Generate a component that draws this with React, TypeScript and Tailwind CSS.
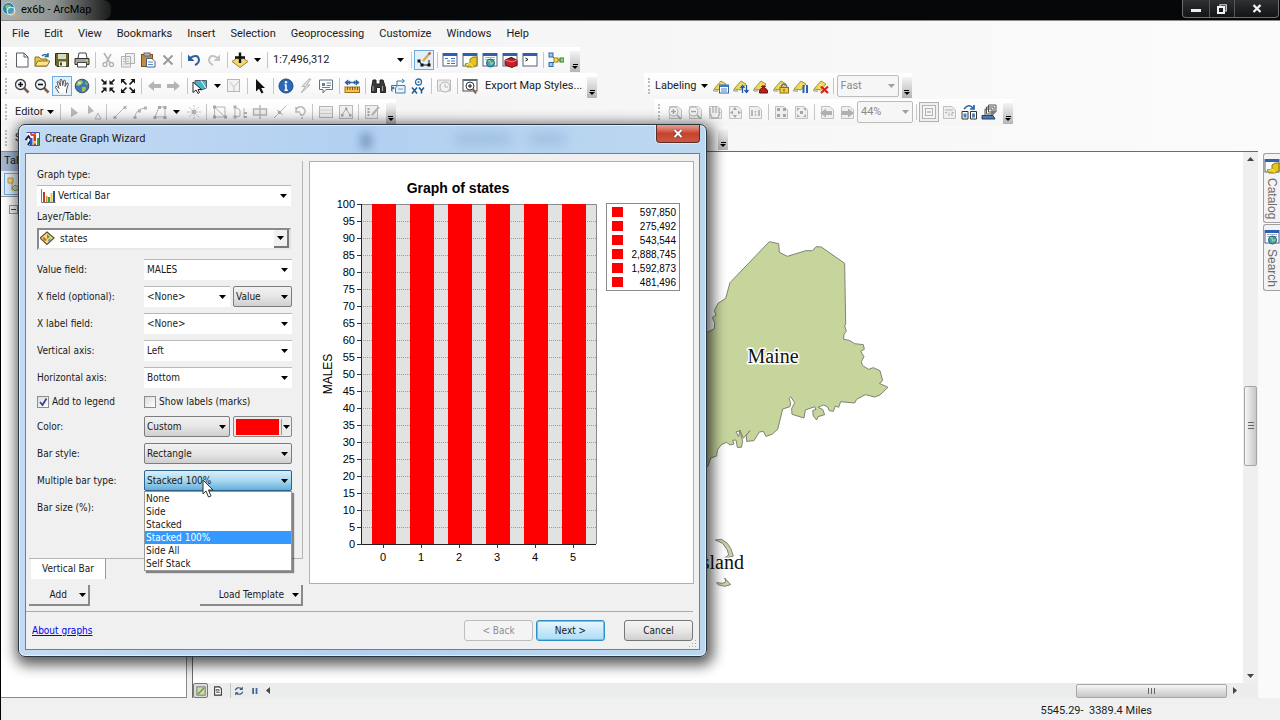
import React from "react";

type Children = { children?: React.ReactNode };

/* ---------- icon drawings, 16 x 16 ---------- */

const TIP = "M1 11 L8 3 L13 6 L8 12 Z";

function LabelTag() {
  return (
    <>
      <path d="M0 13 L4 8 M1 13 H5" stroke="#8a8a6a" />
      <path d={TIP} fill="#ecd95c" stroke="#a8963a" />
      <path d="M7 6 L9 8" stroke="#fff3a0" />
    </>
  );
}

function WindowFrame({ children }: Children) {
  return (
    <>
      <rect x="1" y="1.5" width="14" height="12.5" fill="#fff" stroke="#55637c" />
      <rect x="1" y="1" width="14" height="3" fill="#2f5fae" />
      {children}
    </>
  );
}

function PageFrame({ children }: Children) {
  return (
    <>
      <path d="M2.5 2.5 H11 L14.5 6 V14.5 H2.5 Z" fill="#efefef" stroke="#c0c0c0" />
      {children}
    </>
  );
}

const ICONS: Record<string, React.ReactNode> = {
  new: <path d="M2.5 1 H10 L14 5 V15 H2.5 Z M10 1 V5 H14" fill="#fff" stroke="#555d66" />,
  open: (
    <>
      <path d="M1 14 V5 H5 L7 7 H13 V14 Z" fill="#e8c34c" stroke="#8a7020" />
      <path d="M1 14 L4 9 H16 L13 14 Z" fill="#fbe58a" stroke="#8a7020" />
      <path d="M8 4 Q11 1 14 4 M14 1 V4.5 H10.5" fill="none" stroke="#2d6f9e" strokeWidth="1.5" />
    </>
  ),
  save: (
    <>
      <path d="M1.5 1.5 H14.5 V14.5 H3 L1.5 13 Z" fill="#6b692f" stroke="#33331c" />
      <rect x="4" y="2" width="8" height="5" fill="#d9dbc0" />
      <rect x="5" y="9.5" width="7" height="5" fill="#f2f2e6" />
      <rect x="6" y="10.5" width="2" height="3" fill="#44442a" />
    </>
  ),
  print: (
    <>
      <path d="M4 6 L5 1 H12 L13 6" fill="#fff" stroke="#444" />
      <path d="M1 6.5 H15 V12.5 H1 Z" fill="#a5a59c" stroke="#333" />
      <path d="M3.5 10.5 H12.5 V15 H3.5 Z" fill="#fff" stroke="#444" />
      <path d="M12 8.5 h2" stroke="#f3d24a" />
    </>
  ),
  cut: (
    <>
      <path d="M4 1 L10 11 M11 2 L6 11" stroke="#b4b4b4" strokeWidth="1.6" />
      <circle cx="5" cy="12.5" r="2" fill="none" stroke="#b4b4b4" strokeWidth="1.4" />
      <circle cx="11.5" cy="12.5" r="2" fill="none" stroke="#b4b4b4" strokeWidth="1.4" />
    </>
  ),
  copy: (
    <>
      <path d="M5.500 1.500 H14.500 V11.500 H5.500 Z M1.500 4.500 H10.500 V15 H1.500 Z" fill="#f0f0f0" stroke="#b0b0b0" />
      <path d="M3 7 H9 M3 9.500 H9 M3 12 H9" stroke="#bdbdbd" />
    </>
  ),
  paste: (
    <>
      <rect x="1.5" y="2.500" width="11" height="12" fill="#c28a3c" stroke="#7a5218" />
      <rect x="4" y="1" width="6" height="3" fill="#b9b9b9" stroke="#666" />
      <path d="M6.500 6.500 H12 L15 9.500 V15 H6.500 Z" fill="#fff" stroke="#446087" />
      <path d="M8 10 H13 M8 12.500 H13" stroke="#5b85bb" />
    </>
  ),
  delete: <path d="M3.500 3.500 L12.500 12.500 M12.500 3.500 L3.500 12.500" stroke="#9b9b9b" strokeWidth="2" />,
  undo: (
    <>
      <path d="M4 6 Q12 1 13 8 Q13 11 9 13" fill="none" stroke="#2f5f9f" strokeWidth="2" />
      <path d="M2 2.500 V9 H8.500 Z" fill="#2f5f9f" />
    </>
  ),
  redo: (
    <>
      <path d="M12 6 Q4 1 3 8 Q3 11 7 13" fill="none" stroke="#c4c4c4" strokeWidth="2" />
      <path d="M14 2.500 V9 H7.500 Z" fill="#c4c4c4" />
    </>
  ),
  addData: (
    <>
      <path d="M8 4 L16 9.500 L8 15.500 L0 9.500 Z" fill="#f1d777" stroke="#a08020" />
      <path d="M8 0.500 V11 M3 5.500 H13" stroke="#111" strokeWidth="2.400" />
    </>
  ),
  editTool: (
    <>
      <path d="M3 9 L6 13 H13 V8" fill="none" stroke="#111" />
      <path d="M1.500 7.500 h3 v3 h-3z M4.500 11.500 h3 v3 h-3z M11.500 11.500 h3 v3 h-3z" fill="#111" />
      <path d="M7 9 L13.500 1.500" stroke="#d9ad3f" strokeWidth="2.400" />
      <path d="M12.500 2.500 L14.500 0.500" stroke="#c2574a" strokeWidth="2.400" />
    </>
  ),
  winToc: (
    <WindowFrame>
      <path d="M3 6.500 H6 M5 9 H8 M5 11.500 H8" stroke="#3a75c4" />
      <path d="M9 6.500 H13 M9 9 H13 M9 11.500 H13" stroke="#3a75c4" />
    </WindowFrame>
  ),
  winCatalog: (
    <WindowFrame>
      <path d="M8 7 L11 5 H15 V13 L11 15 H5 L3 12 L8 11 Z" fill="#e3c51f" stroke="#8f7a10" />
      <path d="M4 13 L8 11 L11 15" stroke="#f9ea7c" fill="none" />
    </WindowFrame>
  ),
  winSearch: (
    <WindowFrame>
      <path d="M3 5.500 H13 M3 7.500 H13" stroke="#a9b3c2" />
      <circle cx="8.500" cy="11" r="4" fill="#3fa0b8" stroke="#1f5f94" />
      <path d="M6 9 Q9 8 8.500 12 Q11 12 11 10" stroke="#8fd07a" fill="none" strokeWidth="1.500" />
    </WindowFrame>
  ),
  winToolbox: (
    <WindowFrame>
      <path d="M3 8 L9 5.500 L15 8 V13 L10 15.500 L3 13 Z" fill="#c8202a" stroke="#7b1015" />
      <path d="M3 8 L10 10 L15 8" stroke="#f08080" fill="none" />
      <path d="M7 7 Q9 4 12 7" stroke="#5e0c10" fill="none" />
    </WindowFrame>
  ),
  winPython: (
    <WindowFrame>
      <path d="M3.500 6 L6 7.500 L3.500 9" fill="none" stroke="#111" />
    </WindowFrame>
  ),
  model: (
    <>
      <path d="M4 4 L8 8 L4 12 M8 8 H12" stroke="#444" fill="none" />
      <rect x="1" y="1" width="4" height="4" fill="#9cc7ee" stroke="#2f69a8" />
      <rect x="1" y="10.500" width="4" height="4" fill="#9cc7ee" stroke="#2f69a8" />
      <rect x="6" y="6" width="4" height="4" fill="#f3e14c" stroke="#968617" />
      <rect x="12" y="6" width="4" height="4" fill="#8ed37a" stroke="#357f2a" />
    </>
  ),
  zoomIn: (
    <>
      <path d="M10 10 L14.500 14.500" stroke="#8a5a4a" strokeWidth="2.600" />
      <circle cx="6.500" cy="6.500" r="5" fill="#eef4fa" stroke="#3d3d3d" strokeWidth="1.300" />
      <path d="M6.500 4 V9 M4 6.500 H9" stroke="#111" strokeWidth="1.600" />
    </>
  ),
  zoomOut: (
    <>
      <path d="M10 10 L14.500 14.500" stroke="#8a5a4a" strokeWidth="2.600" />
      <circle cx="6.500" cy="6.500" r="5" fill="#eef4fa" stroke="#3d3d3d" strokeWidth="1.300" />
      <path d="M4 6.500 H9" stroke="#111" strokeWidth="1.600" />
    </>
  ),
  pan: (
    <path
      d="M5 15 L1.500 9.500 Q1 8 3 8.500 L5 10.500 L3 4 Q3.500 2.500 4.800 4 L6.500 8 L6 2 Q7 0.500 8 2 L8.700 7.500 L9.800 2.500 Q11 1.500 11.500 3 L11 8.500 L13 5 Q14.500 4.500 14.200 6.500 L12.500 12 V15"
      fill="#fff"
      stroke="#555"
    />
  ),
  globe: (
    <>
      <circle cx="8" cy="8" r="6.800" fill="#3c78b8" stroke="#3d4f66" />
      <path d="M4 3 Q8 1 9 4 Q9 6 6 7 Q4 9 2 7 Z M8 9 Q12 8 12 10 Q11 14 8 14 Z M11 3 L14 6 L12 7 Z" fill="#a3bf4c" />
      <circle cx="5.500" cy="5" r="1.600" fill="#e6f3d2" opacity=".7" />
    </>
  ),
  fixedIn: (
    <>
      <path d="M1.500 1.500 L5 5 M14.500 1.500 L11 5 M1.500 14.500 L5 11 M14.500 14.500 L11 11" stroke="#151515" strokeWidth="1.700" />
      <path d="M6.500 2 V6.500 H2 Z M9.500 2 V6.500 H14 Z M6.500 14 V9.500 H2 Z M9.500 14 V9.500 H14 Z" fill="#151515" />
    </>
  ),
  fixedOut: (
    <>
      <path d="M3 3 L6.500 6.500 M13 3 L9.500 6.500 M3 13 L6.500 9.500 M13 13 L9.500 9.500" stroke="#151515" strokeWidth="1.700" />
      <path d="M1 5.500 V1 H5.500 Z M15 5.500 V1 H10.500 Z M1 10.500 V15 H5.500 Z M15 10.500 V15 H10.500 Z" fill="#151515" />
    </>
  ),
  back: <path d="M2 8 L8 3 V6 H15 V10 H8 V13 Z" fill="#b4b4b4" />,
  forward: <path d="M14 8 L8 3 V6 H1 V10 H8 V13 Z" fill="#b4b4b4" />,
  selectFeat: (
    <>
      <path d="M3 2.500 H14.500 V10 L9 12 L3 8 Z" fill="#43b6cf" stroke="#4e5d63" />
      <path d="M9 2.500 L14 10" stroke="#fff" />
      <path d="M1 4 V14.500 L4 12 L6 15.500 L7.500 14.500 L6 11.500 H9.500 Z" fill="#fff" stroke="#222" />
    </>
  ),
  clearSel: (
    <>
      <rect x="1.500" y="1.500" width="12" height="12" fill="#f2f2f2" stroke="#b6b6b6" />
      <path d="M4 4 L8 9 L13 3 M8 9 V13" stroke="#c4c4c4" fill="none" />
    </>
  ),
  pointer: <path d="M4 1 V13.500 L7 10.800 L9.500 15.500 L11.500 14.500 L9.200 10 H13 Z" fill="#111" />,
  info: (
    <>
      <circle cx="8" cy="8" r="7" fill="#2d67b8" stroke="#1c4a8a" />
      <path d="M8 7 V12 M6.500 7 H8.500 M6.500 12.300 H9.800" stroke="#fff" strokeWidth="1.600" />
      <circle cx="8" cy="4.200" r="1.200" fill="#fff" />
    </>
  ),
  bolt: <path d="M11 1 L4 8.500 H7.500 L3 15 L12 7 H8.500 L13 1 Z" fill="#e3e3e3" stroke="#b3b3b3" />,
  popup: (
    <>
      <path d="M1.500 2 H14.500 V11.500 H8 L5 15 V11.500 H1.500 Z" fill="#fff" stroke="#66717c" />
      <path d="M4 5 h3 v3 h-3 z" fill="#4a87c0" />
      <path d="M8.500 5 H13 M8.500 7.500 H13 M4 9.500 H12" stroke="#4a87c0" />
    </>
  ),
  measure: (
    <>
      <path d="M1 4.500 H15" stroke="#2562a0" strokeWidth="1.200" />
      <path d="M0.500 4.500 L4 1.500 V7.500 Z M7.500 4.500 L4.500 2 V7 Z M15.500 4.500 L12 1.500 V7.500 Z M8.500 4.500 L11.500 2 V7 Z" fill="#2562a0" />
      <rect x="1" y="9" width="14.500" height="5.500" fill="#f3c257" stroke="#a0701f" />
      <path d="M3.500 9 v3 M6 9 v3 M8.500 9 v3 M11 9 v3 M13.500 9 v3" stroke="#7c5512" />
    </>
  ),
  find: (
    <>
      <path d="M3 2 h3 v4 h4 v-4 h3 l2.500 8 v4.500 h-5 v-5 h-4 v5 h-5 v-4.500 Z" fill="#3a3a3a" stroke="#222" />
      <path d="M3 8 v5 M12.500 8 v5" stroke="#aaa" />
    </>
  ),
  route: (
    <>
      <path d="M7.500 7.500 H15 V15 H5.500 V10 Z" fill="#eaf3fb" stroke="#3b7bb2" />
      <path d="M3 13 H1.500 V7.500 H7 M7 7 V3 H14 M12 1 L14.500 3 L12 5" stroke="#3b7bb2" fill="none" />
      <circle cx="3" cy="10" r="1.500" fill="#3b7bb2" />
      <path d="M8 11 H13" stroke="#6ea0c9" />
    </>
  ),
  gotoXY: (
    <>
      <circle cx="8.500" cy="4" r="3" fill="#fff" stroke="#2d6ea8" strokeWidth="1.300" />
      <circle cx="8.500" cy="4" r="1" fill="#2d6ea8" />
      <path d="M2 9.500 L7 15.500 M7 9.500 L2 15.500 M9 9.500 L11.500 12.500 L14 9.500 M11.500 12.500 V15.500" stroke="#1f5795" strokeWidth="1.500" fill="none" />
    </>
  ),
  time: (
    <>
      <path d="M1.500 2 H14.500 V13 H1.500 Z" fill="#ececec" stroke="#bcbcbc" />
      <circle cx="9" cy="9" r="5" fill="#f3f3f3" stroke="#b3b3b3" />
      <path d="M9 6 V9 H12" stroke="#b3b3b3" fill="none" />
    </>
  ),
  exportMap: (
    <>
      <rect x="1" y="1.500" width="14" height="11.500" fill="#fff" stroke="#4c4c4c" />
      <rect x="1" y="1" width="14" height="2" fill="#5b6b80" />
      <circle cx="8" cy="8" r="4" fill="#fff" stroke="#333" />
      <path d="M8 6 V10 M6 8 H10" stroke="#111" />
      <path d="M11 11 L14 15.500" stroke="#8a5a4a" strokeWidth="2" />
    </>
  ),
  editArrow: <path d="M5 3 V13 L12 9 Z" fill="#b9b9b9" />,
  editArrowA: (
    <>
      <path d="M2 1 V10 L8 7 Z" fill="#b9b9b9" />
      <path d="M9 15 L12 9 L15 15 Z" fill="none" stroke="#b9b9b9" />
    </>
  ),
  line: (
    <>
      <path d="M3 13 L13 3" stroke="#b4b4b4" />
      <path d="M1.500 12 h3 v3 h-3z M11.500 2 h3 v3 h-3z" fill="#b4b4b4" />
    </>
  ),
  arc: (
    <>
      <path d="M3 13 Q4 5 13 4" stroke="#b4b4b4" fill="none" />
      <path d="M1.500 12 h3 v3 h-3z M6 5.500 h3 v3 h-3z M12 2.500 h3 v3 h-3z" fill="#b4b4b4" />
    </>
  ),
  trace: (
    <>
      <path d="M3 13 H9 L13 13 V3 H7 L3 13" stroke="#b4b4b4" fill="none" />
      <path d="M1.500 12 h3 v3 h-3z M6 2 h3 v3 h-3z M11.500 2 h3 v3 h-3z M11.500 12 h3 v3 h-3z" fill="#a8a8a8" />
    </>
  ),
  point: (
    <>
      <path d="M8 1 V15 M1 8 H15 M3 3 L13 13 M13 3 L3 13" stroke="#c2c2c2" strokeDasharray="2 1" />
      <rect x="6" y="6" width="4" height="4" fill="#b4b4b4" />
    </>
  ),
  editVert: (
    <>
      <path d="M2.500 3 H13 V13 H2.500 Z M2.500 3 L13 13" fill="none" stroke="#b4b4b4" />
      <path d="M1 1.500 h3 v3 h-3z M1 11.500 h3 v3 h-3z M12 11.500 h3 v3 h-3z" fill="#a8a8a8" />
    </>
  ),
  reshape: (
    <>
      <path d="M3 2 V14 M3 3 L8 6 V12 L3 13 M12 4 V14" fill="none" stroke="#b4b4b4" />
      <path d="M1.500 1.500 h3 v3 h-3z M1.500 11.500 h3 v3 h-3z M12 8 h3 v2 h-3z M12 12 h3 v2 h-3z" fill="#b0b0b0" />
    </>
  ),
  cutPoly: <path d="M1.500 5 H14.500 V11 H1.500 Z M8 1 V15" fill="#eee" stroke="#b4b4b4" strokeWidth="1.400" />,
  split: (
    <>
      <path d="M2 14 L14 2 M5 6 L11 11" stroke="#b4b4b4" />
      <rect x="6" y="7" width="3" height="3" fill="#a8a8a8" />
    </>
  ),
  rotate: <path d="M4 7 Q5 2 10 3 Q15 6 12 10 Q9 13 8 9 M4 3 V8 H8 M9 14 h2" fill="none" stroke="#b9b9b9" strokeWidth="1.500" />,
  table: (
    <>
      <rect x="1.500" y="2.500" width="13" height="11" fill="#eee" stroke="#b4b4b4" />
      <path d="M2 6 H14 M2 9.500 H14" stroke="#cfcfcf" />
    </>
  ),
  sketch: (
    <>
      <rect x="1.500" y="1.500" width="13" height="13" fill="#f0f0f0" stroke="#bababa" />
      <path d="M4 11 L8 5 L12 11" stroke="#aaa" fill="none" />
      <path d="M3 10 h2.500 v2.500 h-2.500z M7 3.500 h2.500 v2.500 h-2.500z M11 10 h2.500 v2.500 h-2.500z" fill="#a4a4a4" />
    </>
  ),
  features: (
    <>
      <rect x="1.500" y="1.500" width="12" height="13" fill="#efefef" stroke="#bdbdbd" />
      <path d="M3.500 5 h2 M3.500 8 h2 M3.500 11 h2" stroke="#a4a4a4" strokeWidth="2" />
      <path d="M8 11 L15 3" stroke="#b4b4b4" strokeWidth="2" />
    </>
  ),
  lblManager: (
    <>
      <LabelTag />
      <rect x="6.500" y="7" width="9" height="8" fill="#fff" stroke="#2c62ad" />
      <rect x="6.500" y="7" width="9" height="2" fill="#3f7acb" />
      <path d="M8 11 H14 M8 13 H14" stroke="#3f7acb" />
    </>
  ),
  lblPriority: (
    <>
      <LabelTag />
      <path d="M9.500 8 V15 M7.500 10 L9.500 7.500 L11.500 10 M13.500 7 V14 M11.500 12 L13.500 14.500 L15.500 12" stroke="#2056a8" fill="none" strokeWidth="1.300" />
    </>
  ),
  lblWeight: (
    <>
      <LabelTag />
      <path d="M8.500 8 h4 l-1 1.500 q4 2 3 5.500 h-8 q-1 -3.500 3 -5.500 Z" fill="#b32020" stroke="#6f1010" />
    </>
  ),
  lblLock: (
    <>
      <LabelTag />
      <path d="M8.500 10 V7.500 Q11 4.500 13.500 7.500 V10" fill="none" stroke="#6f6f6f" strokeWidth="1.500" />
      <rect x="7" y="9.500" width="8.500" height="5.500" fill="#f0cd45" stroke="#8a6f14" />
      <path d="M11 11 v2.500" stroke="#5a4608" />
    </>
  ),
  lblPause: (
    <>
      <LabelTag />
      <path d="M10.500 7 V15 M14 7 V15" stroke="#2c62ad" strokeWidth="2" />
    </>
  ),
  lblUnplaced: (
    <>
      <LabelTag />
      <path d="M8 8.500 L15 15 M15 8.500 L8 15" stroke="#d3241c" strokeWidth="2.300" />
    </>
  ),
  pgZoomIn: (
    <PageFrame>
      <circle cx="6.500" cy="7.500" r="4.500" fill="#f6f6f6" stroke="#b2b2b2" />
      <path d="M6.500 5 V10 M4 7.500 H9 M10 11 L14 15" stroke="#a6a6a6" strokeWidth="1.500" />
    </PageFrame>
  ),
  pgZoomOut: (
    <PageFrame>
      <circle cx="6.500" cy="7.500" r="4.500" fill="#f6f6f6" stroke="#b2b2b2" />
      <path d="M4 7.500 H9 M10 11 L14 15" stroke="#a6a6a6" strokeWidth="1.500" />
    </PageFrame>
  ),
  pgPan: (
    <PageFrame>
      <path d="M3 4 V9 M6 2 V9 M9 2 V9 M12 4 V9 M3 9 L5 14 H11 L13 8" fill="none" stroke="#b0b0b0" strokeWidth="1.400" />
    </PageFrame>
  ),
  pgWhole: (
    <PageFrame>
      <path d="M8 3 L10 6 H6 Z M8 14 L10 11 H6 Z M3 8.500 L6 6.500 V10.500 Z M14 8.500 L11 6.500 V10.500 Z" fill="#a6a6a6" />
    </PageFrame>
  ),
  pgOne: (
    <PageFrame>
      <path d="M5 6 V12 M8.500 7 v1.500 M8.500 10 v1.500 M12 6 V12" stroke="#a6a6a6" strokeWidth="1.500" />
    </PageFrame>
  ),
  pgIn: (
    <PageFrame>
      <path d="M4 4 h3 v3 h-3z M10 4 h3 v3 h-3z M4 10 h3 v3 h-3z M10 10 h3 v3 h-3z" fill="#a6a6a6" />
    </PageFrame>
  ),
  pgOut: (
    <PageFrame>
      <path d="M4 4 h3 L4 7z M13 4 v3 L10 4z M4 13 h3 L4 10z M13 13 h-3 L13 10z M7 7 h3 v3 h-3z" fill="#a6a6a6" />
    </PageFrame>
  ),
  pgBack: (
    <PageFrame>
      <path d="M1 9 L7 4.500 V7 H13 V11 H7 V13.500 Z" fill="#b0b0b0" />
    </PageFrame>
  ),
  pgForward: (
    <PageFrame>
      <path d="M15 9 L9 4.500 V7 H2 V11 H9 V13.500 Z" fill="#b0b0b0" />
    </PageFrame>
  ),
  draft: (
    <>
      <rect x="1.500" y="1.500" width="13" height="13" fill="#f4f4f4" stroke="#b4b4b4" />
      <rect x="4.500" y="4.500" width="7" height="7" fill="none" stroke="#b4b4b4" />
      <path d="M6 8 H10" stroke="#999" />
    </>
  ),
  focus: (
    <PageFrame>
      <path d="M4 6 H12 M4 8.500 H6 M8 8.500 V12 M11 8.500 H13 M11 8.500 V12" stroke="#b0b0b0" />
    </PageFrame>
  ),
  changeLayout: (
    <>
      <path d="M3 5 Q8 -1 12 4 M13 1 V5 H9" fill="none" stroke="#2c62ad" strokeWidth="1.700" />
      <path d="M1 7.500 H7 V15 H1 Z M9.500 7.500 H15.500 V15 H9.500 Z" fill="#fff" stroke="#333" />
      <path d="M2.500 9.500 h3 v4 h-3z M11 9.500 h3 v4 h-3z" fill="#4d80bd" />
    </>
  ),
  dataDriven: (
    <>
      <path d="M7.500 1 H15 V8 H7.500 Z M5.500 3 H13 V10 H5.500 Z M4 5 H11 V12 H4 Z" fill="#f5f5ef" stroke="#555" />
      <path d="M1 11.500 H12 L14 15 H1 Z" fill="#4a79b4" stroke="#273f60" />
    </>
  ),
  arcmap: (
    <>
      <circle cx="6.500" cy="6.500" r="6" fill="#2e7fa0" stroke="#bcd6df" />
      <path d="M3 4 Q6 1 9 4 Q8 8 5 9 Z" fill="#79c08a" />
      <circle cx="9" cy="9" r="4" fill="#5fb0c4" fillOpacity=".6" stroke="#e8eef2" />
      <path d="M12 12 L15 15" stroke="#e3a64c" strokeWidth="2" />
    </>
  ),
  wizard: (
    <>
      <path d="M1.500 1.500 H14.500 V14.500 H4" fill="#fff" stroke="#2b55c8" />
      <path d="M0.500 9 L3.500 5 L6 9 L3 14" fill="none" stroke="#222" strokeWidth="1.800" />
      <rect x="5" y="7" width="2.500" height="7" fill="#2b55c8" />
      <rect x="8.500" y="4" width="2.500" height="10" fill="#d33a1e" />
      <rect x="12" y="7" width="2" height="7" fill="#3f9a3d" />
      <path d="M4 0.500 L8 3 L12 0.500 L10 5 H6 Z" fill="#e4461e" />
      <path d="M8.500 10 h2.500 v2.500 h-2.500z" fill="#f5d43a" />
    </>
  ),
  vbar: (
    <>
      <path d="M1.500 1 V14.500 H15.500" stroke="#777" fill="none" />
      <rect x="3" y="4" width="2" height="10" fill="#c03a2b" />
      <rect x="6" y="8" width="1.500" height="6" fill="#d98a2b" />
      <rect x="8" y="9" width="2" height="5" fill="#3f9a3d" />
      <rect x="10.500" y="5" width="2" height="9" fill="#e8c520" />
      <rect x="13" y="3" width="2" height="11" fill="#2b4fb0" />
    </>
  ),
  layer: (
    <>
      <path d="M7 1 L14 7 L7 13.500 L0 7 Z" fill="#f3dd7f" stroke="#5d5030" strokeWidth="1.200" />
      <path d="M7 3 L10 6 L7 8 Z" fill="#4fa65a" />
      <path d="M4 6 L7 9 L5 10 L2.500 7 Z" fill="#d15c3a" />
      <path d="M8 9 L11 7 L9 11 Z" fill="#4b83c7" />
    </>
  ),
  tocList: (
    <>
      <path d="M1 2 h5 v5 h-5z" fill="#f3d98a" stroke="#c79a3a" />
      <path d="M5 7 V14 H12" fill="none" stroke="#999" />
      <path d="M8 9 L13 12 L8 15 L5 12 Z" fill="#cfe3a8" stroke="#8aa25a" />
    </>
  ),
  dataView: (
    <>
      <rect x="2.500" y="2.500" width="11" height="11" fill="#cfdcae" stroke="#55604a" />
      <path d="M4 12 L12 4" stroke="#6f8f4a" strokeWidth="2" />
    </>
  ),
  layoutView: (
    <>
      <path d="M3.500 2.500 H10 L12.500 5 V13.500 H3.500 Z" fill="#fff" stroke="#333" strokeWidth="1.400" />
      <path d="M5.500 6 h4 v2 h-4z M5.500 10 h5" stroke="#444" fill="none" />
    </>
  ),
  refresh: (
    <>
      <path d="M3 7 Q5 2 11 4.500 M13 9 Q11 14 5 11.500" fill="none" stroke="#3c5470" strokeWidth="1.500" />
      <path d="M13 2 V6.500 H8.500 Z M3 14 V9.500 H7.500 Z" fill="#3c5470" />
    </>
  ),
  pause: <path d="M5.500 4 V12 M10 4 V12" stroke="#3f65a0" strokeWidth="2.400" />,
};

function Icon({ name, small }: { name: string; small?: boolean }) {
  return (
    <svg viewBox="0 0 16 16" className={small ? "size-3 shrink-0" : "size-4 shrink-0"} aria-hidden="true">
      <g fill="none">{ICONS[name]}</g>
    </svg>
  );
}

function Caret({ dim }: { dim?: boolean }) {
  return (
    <svg viewBox="0 0 7 4" className={dim ? "h-1 w-[7px] text-[#a0a0a0]" : "h-1 w-[7px] text-black"} aria-hidden="true">
      <path d="M0 0 H7 L3.500 4 Z" fill="currentColor" />
    </svg>
  );
}

/* ---------- toolbar parts ---------- */

function Grip() {
  return <span className="mr-[5px] ml-1 h-4 w-0 border-l-2 border-dotted border-[#bdbdbd]" />;
}

function Sep() {
  return (
    <span className="flex w-[6px] shrink-0 justify-center">
      <span className="h-4 w-px bg-[#c6c6c6]" />
    </span>
  );
}

function Tool({ name, active, dim }: { name: string; active?: boolean; dim?: boolean }) {
  const look = active ? (dim ? "border border-[#b0b0b0] bg-[#efefef]" : "border border-[#6fa9e0] bg-[#e3f0fb]") : "";
  return (
    <button type="button" aria-label={name} className={`flex h-5 w-5 shrink-0 items-center justify-center ${look}`}>
      <Icon name={name} />
    </button>
  );
}

function Tools({ names }: { names: string[] }) {
  return (
    <>
      {names.map((n, i) =>
        n === "|" ? (
          <Sep key={i} />
        ) : n === "v" ? (
          <span key={i} className="flex w-[14px] justify-center">
            <Caret />
          </span>
        ) : (
          <Tool key={i} name={n} />
        ),
      )}
    </>
  );
}

function Overflow() {
  return (
    <button
      type="button"
      aria-label="Toolbar options"
      className="mt-[3px] flex h-[21px] w-[10px] shrink-0 flex-col items-center justify-end gap-px bg-linear-to-b from-[#f4f4f4] to-[#b5b5b5] pb-[3px]"
    >
      <span className="h-px w-[5px] bg-black" />
      <svg viewBox="0 0 6 3" className="h-[3px] w-[6px]" aria-hidden="true">
        <path d="M0 0 H6 L3 3 Z" />
      </svg>
    </button>
  );
}

function ToolbarSelect({ label, value, width, dim }: { label: string; value: string; width: string; dim?: boolean }) {
  return (
    <span className={`relative flex h-[22px] shrink-0 items-center bg-white ${width}`}>
      <select
        aria-label={label}
        className={`h-full w-full appearance-none px-[3px] outline-none ${dim ? "rounded-xs border border-[#bcbcbc] bg-[#f6f6f6] text-[#8a8a8a]" : "text-[#222]"}`}
      >
        <option>{value}</option>
      </select>
      <span className="pointer-events-none absolute right-1">
        <Caret dim={dim} />
      </span>
    </span>
  );
}

function Bar({ children }: Children) {
  return <div className="flex h-full items-center bg-linear-to-b from-white to-[#f5f5f5]">{children}</div>;
}

/* ---------- dialog parts ---------- */

function Combo({
  id,
  value,
  look = "flat",
  width = "w-[148px]",
  icon,
}: {
  id: string;
  value: string;
  look?: "flat" | "button" | "hot" | "sunken";
  width?: string;
  icon?: string;
}) {
  const looks = {
    flat: "h-[21px] border-t border-[#b9b9b9] bg-white",
    button: "h-[21px] rounded-xs border border-[#7c7c7c] bg-linear-to-b from-[#f2f2f2] via-[#e6e6e6] to-[#cfcfcf]",
    hot: "h-[21px] rounded-xs border border-[#2c628b] bg-linear-to-b from-[#d9eff9] via-[#a9d9f0] to-[#64aedb]",
    sunken: "h-[22px] border-2 border-[#8a8a8a] border-r-[#e0e0e0] border-b-[#e8e8e8] bg-white",
  };
  return (
    <span className={`relative flex items-center ${width}`}>
      {icon && (
        <span className="pointer-events-none absolute left-[3px]">
          <Icon name={icon} />
        </span>
      )}
      <select
        id={id}
        className={`w-full appearance-none outline-none ${looks[look]} ${icon ? "pl-[21px]" : look === "flat" ? "pl-[3px]" : "pl-[2px]"}`}
      >
        <option>{value}</option>
      </select>
      {look === "sunken" ? (
        <span className="pointer-events-none absolute right-[2px] flex h-[18px] w-[15px] items-center justify-center border-r-2 border-b-2 border-[#777] bg-[#f0f0f0]">
          <Caret />
        </span>
      ) : (
        <span className="pointer-events-none absolute right-[4px]">
          <Caret />
        </span>
      )}
    </span>
  );
}

function Field({ id, label, children }: { id: string; label: string } & Children) {
  return (
    <div className="flex h-[27px] items-center">
      <label htmlFor={id} className="w-[107px] shrink-0">
        {label}
      </label>
      {children}
    </div>
  );
}

function Check({ label, checked }: { label: string; checked?: boolean }) {
  return (
    <label className="flex items-center gap-[3px]">
      <span className="relative flex">
        <input
          type="checkbox"
          defaultChecked={checked}
          className="peer size-3 appearance-none border border-[#8d8d8d] bg-linear-to-br from-[#dcdcdc] to-white"
        />
        <svg viewBox="0 0 12 12" className="pointer-events-none absolute inset-0 hidden peer-checked:block" aria-hidden="true">
          <path d="M3 6 L5.500 9 L9.500 2.500" fill="none" stroke="#3b3f9c" strokeWidth="1.800" />
        </svg>
      </span>
      {label}
    </label>
  );
}

const BAR_TYPES = ["None", "Side", "Stacked", "Stacked 100%", "Side All", "Self Stack"];
const LEGEND = ["597,850", "275,492", "543,544", "2,888,745", "1,592,873", "481,496"];

function Chart() {
  const left = 51;
  const top = 42;
  const base = 382;
  return (
    <svg viewBox="0 0 383 418" className="w-full font-['Liberation_Sans',sans-serif]" role="img" aria-label="Graph of states">
      <text x="148" y="31" textAnchor="middle" className="text-[14px] font-bold">
        Graph of states
      </text>
      <rect x={left} y={top} width="235" height="340" fill="#e2e2e2" />
      {Array.from({ length: 21 }, (_, i) => {
        const y = base - i * 17;
        return (
          <g key={i}>
            <path d={`M${left} ${y + 0.5} H286`} stroke="#9c9c9c" strokeDasharray="1 1" />
            <path d={`M${left - 4} ${y + 0.5} H${left}`} stroke="#333" />
            <text x={left - 6} y={y + 4} textAnchor="end" className="text-[11px]">
              {i * 5}
            </text>
          </g>
        );
      })}
      <path d="M51 42.500 H286.500 V382" fill="none" stroke="#8a8a8a" />
      {LEGEND.map((_, i) => (
        <g key={i}>
          <rect x={62 + i * 38} y={top} width="24" height="340" fill="#fe0000" />
          <path d={`M${73.5 + i * 38} ${base} v4`} stroke="#333" />
          <text x={73 + i * 38} y="399" textAnchor="middle" className="text-[11px]">
            {i}
          </text>
        </g>
      ))}
      <path d="M51.500 42 V382.500 H286" fill="none" stroke="#222" />
      <text x="22" y="212" textAnchor="middle" transform="rotate(-90 22 212)" className="text-[12px]">
        MALES
      </text>
      <rect x="296.500" y="41.500" width="73" height="87" fill="#fff" stroke="#8a8a8a" />
      {LEGEND.map((v, i) => (
        <g key={v}>
          <rect x="302" y={45 + i * 14} width="11" height="10" fill="#fe0000" />
          <text x="366" y={54 + i * 14} textAnchor="end" className="text-[10px]">
            {v}
          </text>
        </g>
      ))}
    </svg>
  );
}

function FormPanel() {
  return (
    <div className="flex w-[274px] shrink-0 flex-col">
      <div className="flex h-[398px] flex-col border-r border-b border-[#b4b4b4] pt-[3px] pl-2">
        <label htmlFor="graphType" className="flex h-[21px] items-center">
          Graph type:
        </label>
        <Combo id="graphType" value="Vertical Bar" width="w-[254px]" icon="vbar" />
        <label htmlFor="layer" className="flex h-[22px] items-center">
          Layer/Table:
        </label>
        <Combo id="layer" value="states" width="w-[254px]" icon="layer" look="sunken" />
        <div className="mt-[6px]">
          <Field id="valueField" label="Value field:">
            <Combo id="valueField" value="MALES" />
          </Field>
          <Field id="xField" label="X field (optional):">
            <div className="flex gap-[3px]">
              <Combo id="xField" value="<None>" width="w-[86px]" />
              <Combo id="xFieldOrder" value="Value" width="w-[59px]" look="button" />
            </div>
          </Field>
          <Field id="xLabel" label="X label field:">
            <Combo id="xLabel" value="<None>" />
          </Field>
          <Field id="vAxis" label="Vertical axis:">
            <Combo id="vAxis" value="Left" />
          </Field>
          <Field id="hAxis" label="Horizontal axis:">
            <Combo id="hAxis" value="Bottom" />
          </Field>
          <div className="flex h-[22px] items-center">
            <div className="w-[107px]">
              <Check label="Add to legend" checked />
            </div>
            <Check label="Show labels (marks)" />
          </div>
          <Field id="color" label="Color:">
            <div className="flex items-center gap-[3px]">
              <Combo id="color" value="Custom" width="w-[86px]" look="button" />
              <button
                type="button"
                aria-label="Bar color"
                className="flex h-[21px] w-[59px] items-center justify-between rounded-xs border border-[#8a8a8a] bg-[#ececec] pr-px pl-[2px]"
              >
                <span className="h-4 w-[43px] bg-[#fe0000]" />
                <span className="flex h-4 items-center border-l border-[#9a9a9a] pl-px">
                  <Caret />
                </span>
              </button>
            </div>
          </Field>
          <Field id="barStyle" label="Bar style:">
            <Combo id="barStyle" value="Rectangle" look="button" />
          </Field>
          <Field id="barType" label="Multiple bar type:">
            <div className="relative">
              <Combo id="barType" value="Stacked 100%" look="hot" />
              <ul
                role="listbox"
                aria-label="Multiple bar type"
                className="absolute top-full left-0 z-10 w-[148px] border border-[#9a9a9a] bg-white shadow-[2px_2px_1px_rgba(0,0,0,0.45)]"
              >
                {BAR_TYPES.map((t) => (
                  <li
                    key={t}
                    role="option"
                    aria-selected={t === "Stacked 100%"}
                    className={`h-[13px] pl-px leading-[13px] ${t === "Stacked 100%" ? "bg-[#3399ff] text-white" : ""}`}
                  >
                    {t}
                  </li>
                ))}
              </ul>
              <svg viewBox="0 0 12 19" className="pointer-events-none absolute top-[9px] left-[58px] z-20 h-[19px] w-3" aria-hidden="true">
                <path d="M1 1 V15 L4 12 L6.500 18 L9 17 L6.500 11 H11 Z" fill="#fff" stroke="#333" />
              </svg>
            </div>
          </Field>
          <div className="flex h-[27px] items-center">Bar size (%):</div>
        </div>
      </div>
      <div className="ml-[2px] flex h-[20px] w-[75px] items-center justify-center border-r border-[#9a9a9a] bg-white">Vertical Bar</div>
      <div className="mt-[6px] flex justify-between">
        <button type="button" className="flex h-[21px] w-[61px] items-center justify-end gap-3 border-r-2 border-b-2 border-[#8a8a8a] pr-[2px]">
          Add
          <Caret />
        </button>
        <button type="button" className="flex h-[21px] w-[103px] items-center justify-end gap-2 border-r-2 border-b-2 border-[#8a8a8a] pr-[2px]">
          Load Template
          <Caret />
        </button>
      </div>
    </div>
  );
}

function Wizard() {
  const plain = "h-[21px] w-[69px] rounded-[3px] border";
  return (
    <section
      aria-label="Create Graph Wizard"
      className="absolute top-[124px] left-[17px] w-[689px] rounded-[7px] border border-[#2c3640] bg-linear-to-r from-[#c3daf3] via-[#b2d0f1] to-[#bcd8f0] px-[6px] pb-[6px] font-['DejaVu_Sans_Condensed','DejaVu_Sans',sans-serif] text-[10px] text-[#1a1a1a] shadow-[2px_4px_14px_4px_rgba(0,0,0,0.65),inset_0_0_0_1px_rgba(255,255,255,0.6)]"
    >
      <header className="relative flex h-[28px] items-start justify-between overflow-hidden font-['Roboto',sans-serif] text-[11px]">
        <div className="pointer-events-none absolute top-2 left-[335px] h-4 w-3 bg-[#5d7fa8] opacity-60 blur-[4px]" />
        <div className="pointer-events-none absolute top-2 left-[430px] h-3 w-14 bg-[#7fa3cf] opacity-40 blur-[6px]" />
        <div className="pointer-events-none absolute top-2 left-[505px] h-3 w-9 bg-[#7fa3cf] opacity-40 blur-[6px]" />
        <h2 className="relative flex h-[27px] items-center gap-1">
          <Icon name="wizard" />
          Create Graph Wizard
        </h2>
        <button
          type="button"
          aria-label="Close wizard"
          className="flex h-[18px] w-[44px] items-center justify-center rounded-b-[4px] border border-t-0 border-[#5e2a26] bg-linear-to-b from-[#e2a093] via-[#c9412c] to-[#c75a45] shadow-[0_0_1px_1px_rgba(255,255,255,0.5)]"
        >
          <svg viewBox="0 0 10 9" className="h-[9px] w-[10px]" aria-hidden="true">
            <path d="M1.500 1 L8.500 8 M8.500 1 L1.500 8" stroke="#6b3a36" strokeWidth="3.400" />
            <path d="M1.500 1 L8.500 8 M8.500 1 L1.500 8" stroke="#fff" strokeWidth="2" />
          </svg>
        </button>
      </header>
      <div className="border border-[#6c7f95] bg-[#f0f0f0]">
        <div className="flex gap-[6px] pt-[7px] pr-[5px] pb-[5px] pl-[3px]">
          <FormPanel />
          <div className="mb-[22px] min-w-0 flex-1 border border-[#b0b0b0] bg-white">
            <Chart />
          </div>
        </div>
        <footer className="relative mr-[6px] flex h-[38px] items-center border-t border-[#a9a9a9]">
          <a href="#about" className="ml-[6px] flex-1 text-[#0000ee] underline">
            About graphs
          </a>
          <button type="button" disabled className={`${plain} border-[#bdbdbd] bg-[#f4f4f4] text-[#8e8e8e]`}>
            &lt; Back
          </button>
          <button
            type="button"
            className={`${plain} ml-[3px] border-[#2f8fc4] bg-linear-to-b from-[#eaf6fd] to-[#a9dcf5] shadow-[inset_0_0_0_1px_#4fd0f5]`}
          >
            Next &gt;
          </button>
          <button type="button" className={`${plain} ml-[19px] border-[#777] bg-linear-to-b from-[#f4f4f4] via-[#e8e8e8] to-[#d0d0d0]`}>
            Cancel
          </button>
          <svg viewBox="0 0 8 8" className="absolute -right-1 bottom-px size-2" aria-hidden="true">
            <path d="M6 0h1v1h-1z M3 3h1v1h-1z M6 3h1v1h-1z M0 6h1v1h-1z M3 6h1v1h-1z M6 6h1v1h-1z" fill="#b5a9a0" />
          </svg>
        </footer>
      </div>
    </section>
  );
}

/* ---------- map ---------- */

function MapCanvas() {
  return (
    <svg width="1050" height="531" viewBox="0 0 1050 531" className="shrink-0 font-['Liberation_Serif',serif]" role="img" aria-label="Map">
      <g transform="translate(487 68) scale(0.33333)" fill="#c6d59c" stroke="#808272" strokeWidth="3" strokeLinejoin="round">
        <path d="M0 760 L84 738 L92 714 L110 708 L112 690 L124 674 L140 667 L150 675 L162 672 L158 661 L168 660 L172 682 L184 682 L188 665 L180 630 L176 650 L168 636 L180 632 L190 655 L210 632 L199 645 L200 664 L222 662 L238 636 L250 634 L258 649 L276 643 L293 628 L308 567 L330 560 L332 548 L327 535 L332 530 L344 548 L335 566 L336 583 L372 594 L376 570 L404 560 L408 568 L398 572 L400 588 L410 600 L414 590 L434 584 L428 568 L414 562 L430 555 L442 560 L448 572 L460 574 L466 558 L476 562 L482 545 L524 549 L530 538 L556 524 L584 531 L600 525 L624 502 L598 490 L608 482 L600 452 L580 443 L566 448 L548 437 L544 425 L552 410 L542 394 L553 388 L550 374 L524 371 L508 361 L491 358 L492 342 L499 334 L494 318 L497 312 L494 130 L424 81 L408 80 L398 92 L378 92 L322 109 L298 97 L296 71 L268 65 L150 188 L137 235 L114 250 L103 272 L108 286 L97 292 L104 308 L103 326 L84 336 L0 340 Z" />
      </g>
      <g transform="translate(497 348) scale(0.33333)" fill="#c9d3a8" stroke="#7d8072" strokeWidth="3" strokeLinejoin="round">
        <path d="M76 120 L95 118 L112 130 L122 145 L130 168 L116 172 L102 175 L116 165 L112 150 L98 130 Z" />
        <path d="M80 248 L98 250 L108 245 L104 234 L122 254 L104 259 L84 254 Z" />
      </g>
      <g className="text-[20px]" fill="#111" stroke="#fff" strokeWidth="3" strokeLinejoin="round" paintOrder="stroke">
        <text x="580" y="211" textAnchor="middle">
          Maine
        </text>
        <text x="551" y="417" textAnchor="end">
          Rhode Island
        </text>
      </g>
    </svg>
  );
}

function ScrollArrow({ d, label }: { d: string; label: string }) {
  return (
    <button type="button" aria-label={label} className="flex size-[15px] shrink-0 items-center justify-center">
      <svg viewBox="0 0 7 7" className="size-[7px]" aria-hidden="true">
        <path d={d} fill="#444" />
      </svg>
    </button>
  );
}

function DockTab({ icon, label }: { icon: string; label: string }) {
  return (
    <button
      type="button"
      className="flex w-[17px] flex-col items-center gap-1 rounded-l-[3px] border border-r-0 border-[#a0a0a0] bg-[#f3f3f3] pt-1 pb-[3px] font-['Liberation_Sans',sans-serif] text-[12px] leading-[14px] text-[#6c6c6c]"
    >
      <Icon name={icon} />
      <span className="[writing-mode:vertical-rl]">{label}</span>
    </button>
  );
}

const MENUS = ["File", "Edit", "View", "Bookmarks", "Insert", "Selection", "Geoprocessing", "Customize", "Windows", "Help"];

export default function App() {
  return (
    <div className="relative flex min-h-screen flex-col overflow-hidden border-l border-black bg-[#f0f0f0] font-['Roboto',sans-serif] text-[11px] leading-[14px] text-[#1c1c1c]">
      <header className="flex h-[21px] items-start justify-between border-b border-[#8a8a8a] bg-[#050708]">
        <h1 className="flex h-5 items-center gap-[3px] rounded-r-lg bg-linear-to-r from-[#a9b0ae] via-[#8d9290] to-[#1a1c1c] pr-5 pl-px text-black">
          <Icon name="arcmap" />
          ex6b - ArcMap
        </h1>
        <div className="mr-px flex h-[18px] divide-x divide-[#55585a] rounded-b-[4px] border border-t-0 border-[#6c7072] bg-linear-to-b from-[#2e3234] to-[#121415]">
          <button type="button" aria-label="Minimize" className="flex w-[27px] items-center justify-center">
            <span className="mt-1 h-[3px] w-[10px] bg-[#eee]" />
          </button>
          <button type="button" aria-label="Restore" className="flex w-[25px] items-center justify-center">
            <svg viewBox="0 0 10 10" className="size-[10px]" aria-hidden="true">
              <path d="M3 2 V0.750 H9.250 V7 H8" fill="none" stroke="#ddd" strokeWidth="1.200" />
              <rect x="1" y="3" width="6" height="6" fill="none" stroke="#f2f2f2" strokeWidth="2" />
            </svg>
          </button>
          <button type="button" aria-label="Close" className="flex w-[43px] items-center justify-center">
            <svg viewBox="0 0 10 9" className="h-[9px] w-[10px]" aria-hidden="true">
              <path d="M1.500 1 L8.500 8 M8.500 1 L1.500 8" stroke="#f2f2f2" strokeWidth="2.300" />
            </svg>
          </button>
        </div>
      </header>

      <div className="bg-linear-to-r from-[#f2f2f2] to-[#fbfbfb]">
        <nav className="flex h-[26px] items-center gap-[15px] pl-[11px]">
          {MENUS.map((m) => (
            <button key={m} type="button">
              {m}
            </button>
          ))}
        </nav>

        <div className="flex h-[26px]">
          <Bar>
            <Grip />
            <Tools names={["new", "open", "save", "print", "|", "cut", "copy", "paste", "delete", "|", "undo", "redo", "|", "addData", "v", "|"]} />
            <ToolbarSelect label="Map scale" value="1:7,496,312" width="w-[138px]" />
            <Sep />
            <Tool name="editTool" active />
            <Sep />
            <Tools names={["winToc", "winCatalog", "winSearch", "winToolbox", "winPython", "|", "model"]} />
            <span className="w-1" />
            <Overflow />
          </Bar>
        </div>

        <div className="flex h-[26px]">
          <div className="flex w-[643px] shrink-0">
            <Bar>
              <Grip />
              <Tools names={["zoomIn", "zoomOut"]} />
              <Tool name="pan" active />
              <Tools
                names={["globe", "|", "fixedIn", "fixedOut", "|", "back", "forward", "|", "selectFeat", "v", "clearSel", "|", "pointer", "|", "info", "bolt", "popup", "|", "measure", "|", "find", "route", "gotoXY", "|", "time", "|", "exportMap"]}
              />
              <button type="button" className="mx-[5px]">
                Export Map Styles...
              </button>
              <Overflow />
            </Bar>
          </div>
          <Bar>
            <Grip />
            <button type="button" className="mr-[3px] flex items-center gap-1">
              Labeling
              <Caret />
            </button>
            <Tools names={["lblManager", "lblPriority", "lblWeight", "lblLock", "lblPause", "lblUnplaced", "|"]} />
            <ToolbarSelect label="Label engine quality" value="Fast" width="w-[62px]" dim />
            <span className="w-[3px]" />
            <Overflow />
          </Bar>
        </div>

        <div className="flex h-[26px]">
          <div className="flex w-[653px] shrink-0">
            <Bar>
              <Grip />
              <button type="button" className="ml-[3px] flex items-center gap-[3px]">
                Editor
                <Caret />
              </button>
              <span className="w-1" />
              <Tools
                names={["|", "editArrow", "editArrowA", "|", "line", "arc", "trace", "v", "point", "|", "editVert", "reshape", "cutPoly", "split", "rotate", "|", "table", "sketch", "|", "features"]}
              />
              <span className="w-1" />
              <Overflow />
            </Bar>
          </div>
          <Bar>
            <Grip />
            <Tools names={["pgZoomIn", "pgZoomOut", "pgPan", "pgWhole", "pgOne", "|", "pgIn", "pgOut", "|", "pgBack", "pgForward"]} />
            <ToolbarSelect label="Page zoom" value="44%" width="w-[56px]" dim />
            <Sep />
            <Tool name="draft" active dim />
            <Tools names={["focus", "changeLayout", "dataDriven"]} />
            <span className="w-1" />
            <Overflow />
          </Bar>
        </div>

        <div className="flex h-[26px]">
          <div className="flex w-[727px] shrink-0 items-center justify-between bg-[#f8f8f8]">
            <div className="flex items-center">
              <Grip />
              <button type="button" className="ml-[3px]">
                S
              </button>
            </div>
            <Overflow />
          </div>
        </div>
      </div>

      <main className="flex flex-1">
        <aside className="flex w-[186px] shrink-0 flex-col border-t border-r border-b border-[#8a8a8a] bg-white">
          <h2 className="h-[19px] bg-[#a3b8d4] pl-[3px] leading-[18px]">Table Of Contents</h2>
          <div className="flex h-[26px] items-center border-b border-[#9a9a9a] bg-[#f0f0f0] pl-[3px]">
            <span className="flex h-[22px] w-[22px] items-center justify-center border border-[#6fa9e0] bg-[#e3f0fb]">
              <Icon name="tocList" />
            </span>
          </div>
          <div className="mt-2 ml-2 flex size-[9px] items-center justify-center border border-[#9a9a9a]">
            <span className="h-px w-[5px] bg-[#444]" />
          </div>
        </aside>

        <div className="ml-[5px] flex min-w-0 flex-1 flex-col border-t border-l border-[#6b6b6b] bg-white">
          <div className="flex min-h-0 flex-1">
            <div className="flex min-w-0 flex-1 overflow-hidden">
              <MapCanvas />
            </div>
            <div className="flex w-[15px] shrink-0 flex-col items-center bg-[#efefef]">
              <ScrollArrow d="M0 5 L3.500 1 L7 5 Z" label="Scroll up" />
              <div className="flex-[27]" />
              <div className="flex h-20 w-[13px] flex-col items-center justify-center gap-[2px] rounded-xs border border-[#a6a6a6] bg-linear-to-r from-[#f6f6f6] to-[#c6c6c6]">
                <span className="h-px w-[6px] bg-[#666]" />
                <span className="h-px w-[6px] bg-[#666]" />
                <span className="h-px w-[6px] bg-[#666]" />
              </div>
              <div className="flex-[25]" />
              <ScrollArrow d="M0 2 L3.500 6 L7 2 Z" label="Scroll down" />
            </div>
          </div>
          <div className="flex h-[15px] items-center bg-[#ebecec] pr-4">
            <button type="button" aria-label="Data view" className="flex size-[15px] items-center justify-center rounded-xs border border-[#777] bg-[#dcdcdc]">
              <Icon name="dataView" small />
            </button>
            <button type="button" aria-label="Layout view" className="mx-[3px] flex size-[13px] items-center justify-center">
              <Icon name="layoutView" small />
            </button>
            <Sep />
            <button type="button" aria-label="Refresh" className="mr-1">
              <Icon name="refresh" small />
            </button>
            <button type="button" aria-label="Pause drawing">
              <Icon name="pause" small />
            </button>
            <ScrollArrow d="M5 0 L1 3.500 L5 7 Z" label="Scroll left" />
            <div className="flex-1" />
            <div className="flex h-[14px] w-[151px] items-center justify-center gap-[2px] rounded-xs border border-[#a6a6a6] bg-linear-to-b from-[#f6f6f6] to-[#c6c6c6]">
              <span className="h-[6px] w-px bg-[#666]" />
              <span className="h-[6px] w-px bg-[#666]" />
              <span className="h-[6px] w-px bg-[#666]" />
            </div>
            <ScrollArrow d="M2 0 L6 3.500 L2 7 Z" label="Scroll right" />
          </div>
        </div>

        <div className="flex w-[22px] shrink-0 flex-col items-end gap-px bg-[#fafafa] pt-[2px]">
          <DockTab icon="winCatalog" label="Catalog" />
          <DockTab icon="winSearch" label="Search" />
        </div>
      </main>

      <footer className="flex h-[22px] items-center justify-end bg-[#f0f0f0] pt-1 pr-[128px] whitespace-pre">5545.29-  3389.4 Miles</footer>

      <Wizard />
    </div>
  );
}
